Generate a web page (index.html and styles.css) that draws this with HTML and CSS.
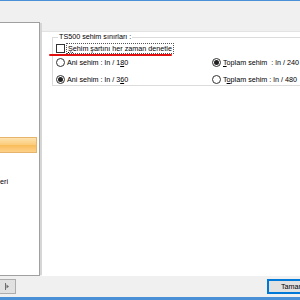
FILE: index.html
```html
<!DOCTYPE html>
<html>
<head>
<meta charset="utf-8">
<link rel="stylesheet" href="styles.css">
</head>
<body>
<div class="window">
  <div class="topline"></div>
  <div class="main">
    <div class="leftbox">
      <div class="item selected"></div>
      <div class="item text">eri</div>
    </div>
    <div class="splitter"></div>
    <div class="page">
      <fieldset class="group">
        <legend>TS500 sehim sınırları :</legend>
        <div class="checkrow">
          <span class="checkbox"></span>
          <span class="focus"><u>Ş</u>ehim şartını her zaman denetle</span>
          <span class="redline"></span>
        </div>
        <div class="radiorow">
          <div class="radio-item col1"><span class="radio"></span><span>Ani sehim : ln / 1<u>8</u>0</span></div>
          <div class="radio-item col2"><span class="radio on"></span><span><u>T</u>oplam sehim &nbsp;: ln / 240</span></div>
        </div>
        <div class="radiorow">
          <div class="radio-item col1"><span class="radio on"></span><span>Ani sehim : ln / 3<u>6</u>0</span></div>
          <div class="radio-item col2"><span class="radio"></span><span>T<u>o</u>plam sehim : ln / 480</span></div>
        </div>
      </fieldset>
    </div>
  </div>
  <div class="bottom">
    <button class="btn small"><svg width="5" height="7" viewBox="0 0 5 7"><rect x="0" y="0" width="1" height="7" fill="#6d6d6d"/><path d="M1.5 1.5 L4 3.5 L1.5 5.5 Z" fill="#6d6d6d"/></svg></button>
    <button class="btn default">Tamam</button>
  </div>
  <div class="bottomline"></div>
</div>
</body>
</html>
```

FILE: styles.css
```css
html, body {
  margin: 0;
  padding: 0;
}
body {
  width: 300px;
  height: 300px;
  overflow: hidden;
  background: #f0f0f0;
  font-family: "Liberation Sans", Arial, sans-serif;
  font-size: 7.2px;
  color: #000;
}
.window {
  width: 300px;
  height: 300px;
  display: flex;
  flex-direction: column;
}
.topline {
  height: 1px;
  background: #4a90d6;
  flex: none;
}
.main {
  display: flex;
  height: 274px;
  flex: none;
}
.leftbox {
  width: 39px;
  margin-top: 21px;
  height: 252px;
  background: #fff;
  border: 1px solid #a0a0a0;
  border-left: none;
  display: flex;
  flex-direction: column;
  flex: none;
}
.item.selected {
  margin-top: 114px;
  width: 37px;
  height: 16px;
  box-sizing: border-box;
  border: 1px solid #e6b46a;
  border-left: none;
  background: linear-gradient(#fde3b0, #fbcb78 50%, #f9bd5a 51%, #fcd089);
}
.item.text {
  margin-top: 24px;
  line-height: 10px;
  padding-left: 0;
  color: #000;
}
.splitter {
  width: 2px;
  margin-top: 22px;
  height: 252px;
  background: #d6d6d6;
  flex: none;
}
.page {
  flex: 1;
  margin-top: 30px;
  height: 244px;
  background: #fff;
  border-top: 1px solid #e3e3e3;
  padding-left: 10px;
  overflow: hidden;
}
.group {
  margin: 1px 0 0 0;
  padding: 0 0 0 3px;
  border: 1px solid #dcdcdc;
  border-right: none;
  height: 53px;
  width: 300px;
  box-sizing: border-box;
}
.group legend {
  padding: 0 1px;
  margin-left: 2px;
  line-height: 8px;
  height: 8px;
  color: #000;
}
.checkrow {
  position: relative;
  display: flex;
  align-items: center;
  height: 11px;
  margin-top: 2px;
}
.checkbox {
  width: 9px;
  height: 9px;
  box-sizing: border-box;
  border: 1px solid #333;
  background: #fff;
  flex: none;
}
.focus {
  margin-left: 1px;
  padding: 0 1px;
  border: 1px dotted #555;
  line-height: 9px;
  white-space: nowrap;
}
.redline {
  position: absolute;
  left: -7px;
  top: 11px;
  width: 123px;
  height: 2px;
  border-radius: 1px;
  background: #e01010;
}
.radiorow {
  display: flex;
  height: 17px;
  align-items: center;
}
.radiorow:first-of-type {
  margin-top: 1px;
}
.radio-item {
  display: flex;
  align-items: center;
  gap: 2px;
  white-space: nowrap;
}
.col1 {
  width: 156px;
}
.radio {
  width: 9px;
  height: 9px;
  box-sizing: border-box;
  border: 1px solid #333;
  border-radius: 50%;
  background: #fff;
  display: flex;
  align-items: center;
  justify-content: center;
  flex: none;
}
.radio.on::after {
  content: "";
  width: 5px;
  height: 5px;
  border-radius: 50%;
  background: #222;
}
.bottom {
  flex: none;
  height: 22px;
  display: flex;
  align-items: center;
  justify-content: space-between;
  padding-top: 1px;
  box-sizing: border-box;
}
.btn {
  font-family: "Liberation Sans", Arial, sans-serif;
  font-size: 7.2px;
  background: #e1e1e1;
  border: 1px solid #adadad;
  height: 15px;
  margin: 0;
  padding: 0;
  display: flex;
  align-items: center;
  color: #000;
}
.btn.small {
  width: 16px;
  border-left: none;
  justify-content: center;
}
.btn.default {
  width: 60px;
  margin-right: -27px;
  border: 1px solid #0078d7;
  box-shadow: inset 0 0 0 1px #0078d7;
  padding-left: 13px;
}
.bottomline {
  flex: none;
  height: 3px;
  background: #4a90d6;
}
```
